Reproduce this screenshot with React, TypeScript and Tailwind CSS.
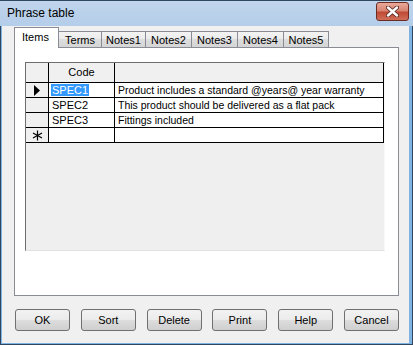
import React from "react";

const font = { fontFamily: '"Liberation Sans", Arial, sans-serif' };

const tabs = [
  { label: "Terms", w: "w-[43px]" },
  { label: "Notes1", w: "w-[44px]" },
  { label: "Notes2", w: "w-[46px]" },
  { label: "Notes3", w: "w-[46px]" },
  { label: "Notes4", w: "w-[46px]" },
  { label: "Notes5", w: "w-[45px]" },
];

const rows = [
  { code: "SPEC1", text: "Product includes a standard @years@ year warranty", current: true },
  { code: "SPEC2", text: "This product should be delivered as a flat pack" },
  { code: "SPEC3", text: "Fittings included" },
];

const buttons = ["OK", "Sort", "Delete", "Print", "Help", "Cancel"];

function CloseGlyph() {
  return (
    <svg width="13" height="11" viewBox="0 0 13 11">
      <path d="M2 1.5 L11 9.5 M11 1.5 L2 9.5" stroke="#5a2a24" strokeWidth="4.2" strokeLinecap="round" />
      <path d="M2 1.5 L11 9.5 M11 1.5 L2 9.5" stroke="#ffffff" strokeWidth="2.4" strokeLinecap="round" />
    </svg>
  );
}

export default function App() {
  return (
    <div
      className="w-[413px] h-[345px] border border-[#2f4760] bg-[#7fb4e2] flex flex-col text-[11px] text-black"
      style={font}
    >
      {/* title bar */}
      <div className="h-[25px] flex items-start justify-between bg-[linear-gradient(#c0d5ec,#b4cde9)] -mx-px pl-[7px] pr-[4px]">
        <span className="text-[12px] leading-[24px]">Phrase table</span>
        <button className="mt-[1px] w-[33px] h-[19px] rounded-[3px] border border-[#6b2b23] bg-[linear-gradient(#eba999,#d78472_45%,#c14a35_55%,#cf6f58)] flex items-center justify-center">
          <CloseGlyph />
        </button>
      </div>

      {/* client area */}
      <div className="flex-1 ml-[1px] mr-[3px] mb-[1px] bg-[#f0f0f0] flex flex-col">
        {/* tab strip */}
        <div className="mt-[1px] h-[20px] pl-[12px] flex items-end">
          <div className="relative z-10 -mb-px h-[21px] w-[45px] bg-white border border-b-0 border-[#898c95] pl-[7px] pt-[2px] leading-[14px]">
            Items
          </div>
          {tabs.map((t) => (
            <div
              key={t.label}
              className={`${t.w} h-[16px] border border-b-0 border-l-0 border-[#898c95] bg-[linear-gradient(#f3f3f3,#ebebeb_50%,#dddddd_50%,#d5d5d5)] flex items-center justify-center leading-[14px]`}
            >
              {t.label}
            </div>
          ))}
        </div>

        {/* tab panel */}
        <div className="ml-[12px] w-[385px] h-[249px] border border-[#898c95] bg-white">
          <div className="ml-[10px] mt-[14px] w-[360px] h-[189px] border-t border-l border-[#6e6e6e] border-r border-b border-r-[#f8f8f8] border-b-[#e0e0e0] bg-[#efefef] flex flex-col">
            {/* header */}
            <div className="flex h-[20px]">
              <div className="w-[23px] border-r border-b border-black bg-[#f0f0f0]" />
              <div className="w-[66px] border-r border-b border-black bg-[#f0f0f0] flex items-center justify-center">
                Code
              </div>
              <div className="flex-1 border-r border-b border-black bg-[#f0f0f0]" />
            </div>
            {rows.map((r) => (
              <div key={r.code} className="flex h-[15px] leading-[14px]">
                <div className="w-[23px] border-r border-b border-black bg-[#f0f0f0] flex items-center justify-center">
                  {r.current && (
                    <svg width="7" height="11" viewBox="0 0 7 11">
                      <path d="M0 0 L6 5.5 L0 11 Z" fill="#000" />
                    </svg>
                  )}
                </div>
                <div className="w-[66px] border-r border-b border-black bg-white pl-[2px]">
                  {r.current ? (
                    <span className="bg-[#3399ff] text-white px-[1px]">{r.code}</span>
                  ) : (
                    <span className="pl-[1px]">{r.code}</span>
                  )}
                </div>
                <div className="flex-1 border-r border-b border-black bg-white pl-[3px] whitespace-nowrap overflow-hidden text-[10.5px]">
                  {r.text}
                </div>
              </div>
            ))}
            <div className="flex h-[15px]">
              <div className="w-[23px] border-r border-b border-black bg-[#f0f0f0] flex items-center justify-center">
                <svg width="11" height="11" viewBox="0 0 11 11">
                  <path d="M5.5 0.5 V10.5 M1 3 L10 8 M10 3 L1 8" stroke="#000" strokeWidth="1.2" />
                </svg>
              </div>
              <div className="w-[66px] border-r border-b border-black bg-white" />
              <div className="flex-1 border-r border-b border-black bg-white" />
            </div>
          </div>
        </div>

        {/* buttons */}
        <div className="mt-[13px] pl-[13px] pr-[10px] flex justify-between">
          {buttons.map((b) => (
            <button
              key={b}
              className="w-[55px] h-[22px] rounded-[3px] border border-[#707070] bg-[linear-gradient(#f2f2f2,#ebebeb_50%,#dddddd_50%,#cfcfcf)] flex items-center justify-center text-[11px]"
              style={font}
            >
              {b}
            </button>
          ))}
        </div>
      </div>
    </div>
  );
}
